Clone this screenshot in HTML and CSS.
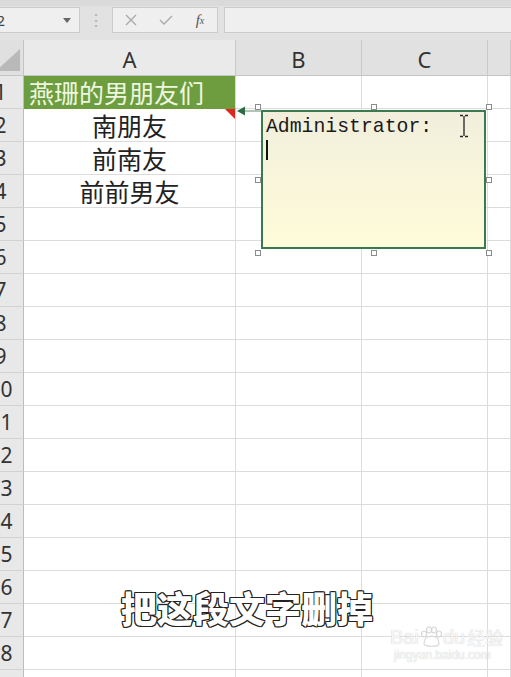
FILE: index.html
```html
<!DOCTYPE html>
<html lang="zh-CN">
<head>
    <meta charset="UTF-8">
    <title>Excel 批注</title>
    <link rel="stylesheet" href="styles.css">
</head>
<body>
    <div class="toolbar">
        <div class="name-box">
            <span class="name-text">A2</span>
            <span class="name-arrow"></span>
        </div>
        <div class="grip">⋮</div>
        <div class="fx-buttons">
            <span class="fx-btn">
                <svg width="12" height="12" viewBox="0 0 12 12"><path d="M1 1L11 11M11 1L1 11" stroke="#aaa" stroke-width="1.4" fill="none"/></svg>
            </span>
            <span class="fx-btn">
                <svg width="14" height="12" viewBox="0 0 14 12"><path d="M1 6L5 10L13 2" stroke="#aaa" stroke-width="1.4" fill="none"/></svg>
            </span>
            <span class="fx-btn fx-label">f<sub>x</sub></span>
        </div>
        <div class="formula-input"></div>
    </div>

    <div class="sheet">
        <div class="corner"><span class="corner-tri"></span></div>
        <div class="col-head col-a">A</div>
        <div class="col-head">B</div>
        <div class="col-head">C</div>
        <div class="col-head"></div>

        <div class="row-head">1</div>
        <div class="cell cell-title">燕珊的男朋友们</div>
        <div class="cell"></div><div class="cell"></div><div class="cell"></div>

        <div class="row-head">2</div>
        <div class="cell cell-center has-note">南朋友<span class="note-mark"></span></div>
        <div class="cell"></div><div class="cell"></div><div class="cell"></div>

        <div class="row-head">3</div>
        <div class="cell cell-center">前南友</div>
        <div class="cell"></div><div class="cell"></div><div class="cell"></div>

        <div class="row-head">4</div>
        <div class="cell cell-center">前前男友</div>
        <div class="cell"></div><div class="cell"></div><div class="cell"></div>

        <div class="row-head">5</div>
        <div class="cell"></div><div class="cell"></div><div class="cell"></div><div class="cell"></div>
        <div class="row-head">6</div>
        <div class="cell"></div><div class="cell"></div><div class="cell"></div><div class="cell"></div>
        <div class="row-head">7</div>
        <div class="cell"></div><div class="cell"></div><div class="cell"></div><div class="cell"></div>
        <div class="row-head">8</div>
        <div class="cell"></div><div class="cell"></div><div class="cell"></div><div class="cell"></div>
        <div class="row-head">9</div>
        <div class="cell"></div><div class="cell"></div><div class="cell"></div><div class="cell"></div>
        <div class="row-head">10</div>
        <div class="cell"></div><div class="cell"></div><div class="cell"></div><div class="cell"></div>
        <div class="row-head">11</div>
        <div class="cell"></div><div class="cell"></div><div class="cell"></div><div class="cell"></div>
        <div class="row-head">12</div>
        <div class="cell"></div><div class="cell"></div><div class="cell"></div><div class="cell"></div>
        <div class="row-head">13</div>
        <div class="cell"></div><div class="cell"></div><div class="cell"></div><div class="cell"></div>
        <div class="row-head">14</div>
        <div class="cell"></div><div class="cell"></div><div class="cell"></div><div class="cell"></div>
        <div class="row-head">15</div>
        <div class="cell"></div><div class="cell"></div><div class="cell"></div><div class="cell"></div>
        <div class="row-head">16</div>
        <div class="cell"></div><div class="cell"></div><div class="cell"></div><div class="cell"></div>
        <div class="row-head">17</div>
        <div class="cell"></div><div class="cell"></div><div class="cell"></div><div class="cell"></div>
        <div class="row-head">18</div>
        <div class="cell"></div><div class="cell"></div><div class="cell"></div><div class="cell"></div>
        <div class="row-head">19</div>
        <div class="cell"></div><div class="cell"></div><div class="cell"></div><div class="cell"></div>
    </div>

    <!-- comment connector -->
    <svg class="note-arrow" width="26" height="12" viewBox="0 0 26 12">
        <path d="M1 6L9 1.5V10.5Z" fill="#2d6b45"/>
        <path d="M9 6H26" stroke="#5f8a6c" stroke-width="1"/>
    </svg>

    <div class="note-frame">
        <span class="handle h-tl"></span>
        <span class="handle h-tc"></span>
        <span class="handle h-tr"></span>
        <span class="handle h-ml"></span>
        <span class="handle h-mr"></span>
        <span class="handle h-bl"></span>
        <span class="handle h-bc"></span>
        <span class="handle h-br"></span>
        <div class="note-box">
            <div class="note-author">Administrator:</div>
            <div class="caret"></div>
        </div>
    </div>

    <svg class="ibeam" width="12" height="24" viewBox="0 0 12 24">
        <path d="M2 1.5H5M7 1.5H10M6 2V22M2 22.5H5M7 22.5H10" stroke="#222" stroke-width="1.3" fill="none"/>
    </svg>

    <div class="subtitle">把这段文字删掉</div>

    <div class="watermark">
        <div class="wm-logo">
            <span>Bai</span>
            <svg width="24" height="22" viewBox="0 0 24 22">
                <g fill="none" stroke="#d6d6d6" stroke-width="1.2">
                    <ellipse cx="5" cy="8" rx="2.5" ry="3"/>
                    <ellipse cx="10" cy="4" rx="2.5" ry="3"/>
                    <ellipse cx="15" cy="4" rx="2.5" ry="3"/>
                    <ellipse cx="20" cy="8" rx="2.5" ry="3"/>
                    <path d="M5 18C5 12 9 10 12.5 10C16 10 20 12 20 18C20 21 5 21 5 18Z"/>
                </g>
            </svg>
            <span>du</span>
            <span class="wm-cn">经验</span>
        </div>
        <div class="wm-url">jingyan.baidu.com</div>
    </div>
</body>
</html>
```

FILE: styles.css
```css
body {
    margin: 0;
    width: 511px;
    height: 677px;
    overflow: hidden;
    position: relative;
    background-color: #fff;
    font-family: "Noto Sans", "Noto Sans CJK SC", sans-serif;
    color: #333;
}

/* formula bar */

.toolbar {
    height: 40px;
    box-sizing: border-box;
    padding: 1px 0 7px;
    display: flex;
    background-color: #e2e2e2;
    border-top: 6px solid #dadada;
}

.name-box {
    margin-left: -20px;
    width: 100px;
    box-sizing: border-box;
    background-color: #efefef;
    border: 1px solid #cbcbcb;
    display: flex;
    align-items: center;
    justify-content: space-between;
    padding: 0 8px 0 6px;
}

.name-text {
    font-size: 15px;
    color: #444;
}

.name-arrow {
    width: 0;
    height: 0;
    border-left: 4px solid transparent;
    border-right: 4px solid transparent;
    border-top: 5px solid #666;
}

.grip {
    width: 32px;
    text-align: center;
    color: #b0b0b0;
    font-size: 16px;
    line-height: 26px;
}

.fx-buttons {
    width: 106px;
    box-sizing: border-box;
    background-color: #efefef;
    border: 1px solid #cbcbcb;
    display: flex;
    align-items: center;
}

.fx-btn {
    display: flex;
    justify-content: center;
    align-items: center;
    width: 34px;
}

.fx-btn:first-child {
    width: 36px;
}

.fx-label {
    font-family: "Liberation Serif", serif;
    font-style: italic;
    font-size: 15px;
    color: #555;
}

.fx-label sub {
    font-size: 10px;
}

.formula-input {
    flex: 1;
    margin-left: 6px;
    background-color: #efefef;
    border: 1px solid #cbcbcb;
    border-right: none;
}

/* grid */

.sheet {
    margin-left: -22px;
    width: 533px;
    display: grid;
    grid-template-columns: 46px 212px 126px 126px 1fr;
    grid-template-rows: 36px;
    grid-auto-rows: 33px;
}

.corner {
    background-color: #e0e0e0;
    border-right: 1px solid #c4c4c4;
    border-bottom: 1px solid #c4c4c4;
    display: flex;
    justify-content: flex-end;
    align-items: flex-end;
    padding: 0 3px 4px 0;
}

.corner-tri {
    width: 0;
    height: 0;
    border-left: 24px solid transparent;
    border-bottom: 22px solid #b9b9b9;
}

.col-head {
    background-color: #e1e1e1;
    border-right: 1px solid #c9c9c9;
    border-bottom: 1px solid #c4c4c4;
    display: flex;
    justify-content: center;
    align-items: center;
    font-size: 22px;
    color: #333;
    padding-top: 2px;
}

.col-head.col-a {
    background-color: #eaeaea;
}

.row-head {
    background-color: #e8e8e8;
    border-right: 1px solid #bcbcbc;
    border-bottom: 1px solid #d2d2d2;
    display: flex;
    justify-content: center;
    align-items: center;
    font-size: 21px;
    color: #333;
}

.cell {
    border-right: 1px solid #dcdcdc;
    border-bottom: 1px solid #dcdcdc;
    display: flex;
    align-items: center;
    font-family: "Noto Sans CJK SC", sans-serif;
    font-size: 25px;
    color: #222;
}

.cell-title {
    background-color: #6d9d3f;
    color: #eef7e0;
    padding-left: 5px;
    border-bottom-color: #6d9d3f;
}

.cell-center {
    justify-content: center;
}

.has-note {
    position: relative;
}

.note-mark {
    position: absolute;
    top: 0;
    right: 0;
    width: 0;
    height: 0;
    border-left: 10px solid transparent;
    border-top: 10px solid #e0261c;
}

/* comment */

.note-arrow {
    position: absolute;
    left: 236px;
    top: 105px;
}

.note-frame {
    position: absolute;
    left: 258px;
    top: 107px;
    width: 231px;
    height: 146px;
}

.handle {
    position: absolute;
    width: 6px;
    height: 6px;
    box-sizing: border-box;
    border: 1px solid #8c8c8c;
    background-color: #fff;
    margin: -3px 0 0 -3px;
}

.h-tl { left: 0; top: 0; }
.h-tc { left: 50%; top: 0; }
.h-tr { left: 100%; top: 0; }
.h-ml { left: 0; top: 50%; }
.h-mr { left: 100%; top: 50%; }
.h-bl { left: 0; top: 100%; }
.h-bc { left: 50%; top: 100%; }
.h-br { left: 100%; top: 100%; }

.note-box {
    margin: 3px 3px 0 3px;
    height: 139px;
    box-sizing: border-box;
    border: 2px solid #3b7a4e;
    background: linear-gradient(#f1efdc, #fffcda);
    padding: 3px 0 0 3px;
}

.note-author {
    font-family: "Liberation Mono", "DejaVu Sans Mono", monospace;
    font-size: 19.8px;
    line-height: 24px;
    color: #1a1a1a;
}

.caret {
    margin-top: 1px;
    width: 2px;
    height: 20px;
    background-color: #111;
}

.ibeam {
    position: absolute;
    left: 458px;
    top: 114px;
}

/* overlays */

.subtitle {
    position: absolute;
    left: 0;
    width: 494px;
    top: 584px;
    text-align: center;
    font-family: "Noto Sans CJK SC", sans-serif;
    font-weight: 900;
    font-size: 36px;
    line-height: 46px;
    color: #fff;
    -webkit-text-stroke: 2px #fff;
    paint-order: stroke fill;
    text-shadow:
        1px 0 0 #222, -1px 0 0 #222, 0 1px 0 #222, 0 -1px 0 #222,
        1px 1px 0 #222, -1px 1px 0 #222, 1px -1px 0 #222, -1px -1px 0 #222;
}

.watermark {
    position: absolute;
    left: 390px;
    top: 626px;
    color: #f6f6f6;
    text-shadow: 0 0 1px #c4c4c4;
}

.wm-logo {
    display: flex;
    align-items: flex-end;
    font-family: "Liberation Sans", sans-serif;
    font-size: 20px;
    line-height: 22px;
}

.wm-cn {
    font-family: "Noto Sans CJK SC", sans-serif;
    font-size: 18px;
    margin-left: 2px;
}

.wm-url {
    font-family: "Liberation Sans", sans-serif;
    font-size: 12px;
    margin-left: 4px;
}
```
